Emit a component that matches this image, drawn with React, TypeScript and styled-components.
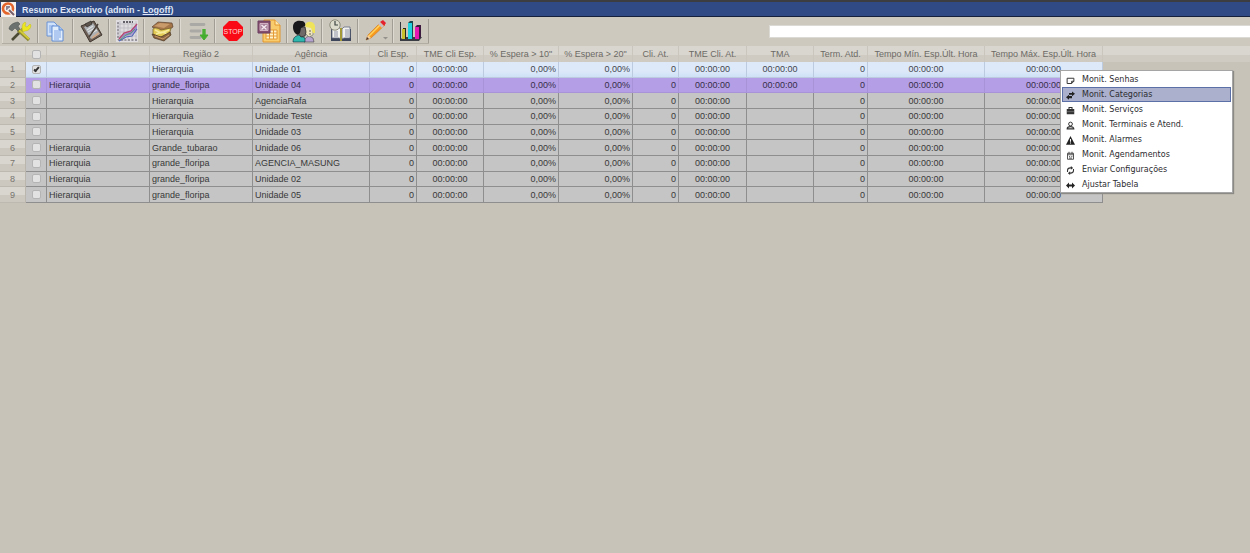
import React from 'react';
import styled, { createGlobalStyle } from 'styled-components';

const GlobalStyle = createGlobalStyle`
  *, *::before, *::after { box-sizing: border-box; }
  html, body, #root { min-height: 100vh; }
  body {
    margin: 0;
    background: #c7c3b8;
    color: #3c3c40;
    font: 9px/12px "Liberation Sans", Arial, sans-serif;
    overflow: hidden;
  }
`;

const TitleBar = styled.header`
  display: flex;
  align-items: center;
  gap: 6px;
  height: 17px;
  padding-left: 1px;
  background: #304a86;
  border-top: 2px solid #3b3d40;
  border-bottom: 1px solid #14203c;
`;

const Logo = styled.svg`
  width: 15px;
  height: 15px;
  background: #f4f1ee;
`;

const Title = styled.h1`
  margin: 0;
  padding-top: 2px;
  color: #dfe6f5;
  font-size: 9px;
  line-height: 12px;
  white-space: nowrap;
  a { color: inherit; }
`;

const Toolbar = styled.div`
  display: flex;
  align-items: center;
  height: 29px;
  padding-left: 2px;
  background: #cdc9be;
`;

const Tools = styled.div`
  display: flex;
  flex: 0 0 427px;
  height: 25px;
  border-bottom: 1px solid #b2ada2;
`;

const ToolButton = styled.button`
  display: flex;
  flex: 1;
  align-items: center;
  justify-content: center;
  padding: 0;
  border: 0;
  border-left: 1px solid #dedad2;
  border-right: 1px solid #a19d94;
  background: #cbc7bd;
  svg { width: 24px; height: 24px; display: block; }
`;

const Search = styled.input`
  flex: 1;
  min-width: 0;
  height: 13px;
  margin-left: 340px;
  padding: 0 4px;
  border: 1px solid #dcdad4;
  border-right: 0;
  background: #fff;
  font: inherit;
`;

const GridArea = styled.main`
  background: linear-gradient(#d9d6cf 0 9px, #cfcac2 9px 16px, transparent 16px);
`;

const Grid = styled.table`
  width: 1103px;
  height: 157px;
  table-layout: fixed;
  border-collapse: separate;
  border-spacing: 0;
`;

const HeadCell = styled.th`
  height: 16px;
  padding: 0;
  border-right: 1px solid #cac6be;
  color: #6c6a65;
  font-weight: normal;
  line-height: 12px;
  white-space: nowrap;
`;

type Tone = 'active' | 'marked' | 'plain';
const fills = {
  active: 'linear-gradient(#dde9f9 0 60%, #cfe1f6)',
  marked: '#b49fe6',
  plain: '#c5c5c5',
};
const rules = { active: '#bccbdf', marked: '#a893d8', plain: '#8e8e8e' };
const ink = { active: '#42464e', marked: '#362e48', plain: '#383838' };

const Cell = styled.td<{ $tone: Tone; $align?: 'left' | 'right' | 'center' }>`
  padding: 0 2px;
  background: ${p => fills[p.$tone]};
  border-right: 1px solid ${p => rules[p.$tone]};
  border-bottom: 1px solid ${p => rules[p.$tone]};
  color: ${p => ink[p.$tone]};
  line-height: 12px;
  text-align: ${p => p.$align ?? 'left'};
  white-space: nowrap;
`;

const RowNumber = styled.th`
  padding: 0;
  border-right: 1px solid #bab6ae;
  border-bottom: 1px solid #bdb8b0;
  background: linear-gradient(#d9d6cf 0 55%, #cdc8bf 55%);
  color: #77756f;
  font-weight: normal;
  line-height: 12px;
`;

const Check = styled.input`
  appearance: none;
  display: block;
  position: relative;
  width: 9px;
  height: 9px;
  margin: 0 auto;
  border: 1px solid #b4b4b4;
  border-radius: 2px;
  background: #e2e2e2;
  &:checked::after {
    content: '';
    position: absolute;
    left: 2px;
    top: 0;
    width: 3px;
    height: 6px;
    border: solid #333;
    border-width: 0 2px 2px 0;
    transform: rotate(42deg);
  }
`;

const Menu = styled.div`
  position: absolute;
  left: 1060px;
  top: 70px;
  width: 173px;
  padding: 1px 1px 0;
  border: 1px solid #a5a5a5;
  background: #fff;
  box-shadow: 1px 1px 1px #8c8a85;
`;

const MenuItem = styled.button<{ $active?: boolean }>`
  display: flex;
  align-items: center;
  gap: 7px;
  width: 100%;
  height: 15px;
  padding: 0 3px;
  border: 1px solid ${p => (p.$active ? '#5a70a6' : 'transparent')};
  background: ${p => (p.$active ? '#abb1cd' : 'transparent')};
  color: #2c2c30;
  font: 8px/12px "DejaVu Sans", Verdana, sans-serif;
  text-align: left;
  white-space: nowrap;
  svg { width: 9px; height: 9px; flex: none; margin-top: 2px; }
`;

const tools = [
  { label: 'Ferramentas', art: <>
    <path d="M4 21 17 8" stroke="#4a4a35" strokeWidth="2.600" />
    <path d="m11 14 6-6" stroke="#a8a23a" strokeWidth="2.600" />
    <path d="m10 11 11 10" stroke="#8d8932" strokeWidth="3.200" />
    <path d="m10 10 11 10" stroke="#d2cb33" strokeWidth="1.800" />
    <path d="M14 9c0-3 1-5 3-6l1 1-1 3 2 1 3-3 1 1c0 4-3 6-6 6l-2 1z" fill="#ece71f" stroke="#bdb82c" strokeWidth=".5" />
    <path d="M1 10c0-3 3-6 9-7l2 2-2 2 2 3-2 2-3-3-3 3z" fill="#6b716e" stroke="#474c4a" strokeWidth=".5" />
  </> },
  { label: 'Copiar', art: <>
    <path d="M4 3h7l3 3v11H4z" fill="#cfe0f9" stroke="#6b92d2" />
    <path d="M6 7h5M6 9h5M6 11h5M6 13h5" stroke="#7ea5e4" />
    <path d="M9 7h7l4 4v11H9z" fill="#e2edfc" stroke="#5f8bd3" />
    <path d="M16 7v4h4" fill="#a9c6ef" stroke="#5f8bd3" />
    <path d="M11 12h7M11 14h7M11 16h7M11 18h7M11 20h5" stroke="#7ea5e4" />
  </> },
  { label: 'Prancheta', art: <>
    <path d="m2 7 13-5 8 14-12 7z" fill="#6d5f55" stroke="#40372f" />
    <path d="m5 8 9-4 7 11-9 5z" fill="#aeb2b4" />
    <path d="m6 5 6-3 1 3-5 3z" fill="#5d544c" stroke="#332f2d" strokeWidth=".7" />
    <path d="m8 11 6-4M9 13l7-4M11 15l7-4" stroke="#dfe1e1" strokeWidth="1.200" />
    <path d="m10 18 7-10 2-3" stroke="#4a413a" strokeWidth="1.500" />
    <path d="m13 19 7-5" stroke="#d0a98a" strokeWidth="1.600" />
  </> },
  { label: 'Gráfico de linhas', art: <>
    <path d="M1 1h22v22H1z" fill="#dfdde0" />
    <path d="M5 2v20M9 2v20M13 2v20M17 2v20M21 2v20M2 5h20M2 9h20M2 13h20M2 17h20" stroke="#b9b6bd" strokeWidth=".7" />
    <path d="M8 3h10" stroke="#3f3b44" strokeDasharray="2 1" strokeWidth="1.500" />
    <path d="M3 3v18h19" stroke="#5f5b66" strokeDasharray="2 1.500" />
    <path d="m4 21 5-6 7-3 6-7v5l-6 6-6 1z" fill="#9a86cf" />
    <path d="m4 20 5-6 7-2 6-7" stroke="#b5476e" strokeWidth="1.400" />
    <path d="m4 22 7-4 6-1 5-7" stroke="#4f62b8" strokeWidth="1.200" />
    <path d="m5 21 6-5 5-2 4-4" stroke="#58a273" />
  </> },
  { label: 'Registros', art: <>
    <path d="m2 8 6-5 14 1 1 4-8 5z" fill="#a5764a" stroke="#5b412b" strokeWidth=".7" />
    <path d="m4 7 6-3 10 1-6 4z" fill="#c99b6b" />
    <path d="M3 10c2-2 5-1 8 1l10-2-2 8-10 1-6-3z" fill="#e2ca55" stroke="#6d5a27" strokeWidth=".7" />
    <path d="m5 11 6 3 8-3M6 15l6-2 6 2" stroke="#f6eb9d" strokeWidth="1.400" />
    <path d="m2 15 9 3 9-5 1 3-7 6-10-3z" fill="#8b6440" stroke="#4c3623" strokeWidth=".7" />
    <path d="m5 17 8 3 6-4" stroke="#c69a6c" />
  </> },
  { label: 'Inserir linha', art: <>
    <path d="M5 5.500h13M5 12h9M5 18.500h9" stroke="#aaa9a5" strokeWidth="2.800" strokeLinecap="round" />
    <path d="M18 10v8" stroke="#4caf35" strokeWidth="3.400" />
    <path d="m14 16 4 5 4-5z" fill="#45ad2d" stroke="#45ad2d" />
  </> },
  { label: 'Parar', art: <>
    <path d="M8 2h8l6 6v8l-6 6H8l-6-6V8z" fill="#f90a14" />
    <text x="12" y="14.500" fill="#ffd9da" fontFamily="Liberation Sans, Arial, sans-serif" fontSize="7" textAnchor="middle">STOP</text>
  </> },
  { label: 'Exportar planilha', art: <>
    <path d="M7 1h11l5 5v17H6V12z" fill="#f8cb6c" stroke="#e0952f" />
    <path d="M18 1v5h5" fill="#ffe9ad" stroke="#e0952f" />
    <path d="M9 11h11v9H9z" fill="#fff3cc" stroke="#e59a35" />
    <path d="M9 14h11M9 17h11M12.500 11v9M16.500 11v9" stroke="#e59a35" />
    <path d="M1 2h12v12H1z" fill="#85506f" stroke="#6b3d60" />
    <path d="M3 4.500h8v7H3z" fill="#a8809a" stroke="#e0c4d2" strokeWidth=".8" />
    <path d="m4.500 6 5 4.500M9.500 6l-5 4.500" stroke="#f6e9ef" strokeWidth="1.400" />
  </> },
  { label: 'Usuários', art: <>
    <path d="M12 23c0-4 3-5 5-6l4 2 1 4z" fill="#b7a3cf" stroke="#444" strokeWidth=".6" />
    <path d="M13 6c4-3 8 0 8 4v6l-4 2-4-4z" fill="#eee6c0" stroke="#555" strokeWidth=".5" />
    <path d="M13 6c2-5 9-4 10 1v7h-2l-2-5-5-1z" fill="#efe35a" />
    <path d="M1 23c0-5 3-6 6-7l6 3v4z" fill="#2fb9ae" stroke="#123" strokeWidth=".6" />
    <path d="M7 8h6l1 5-1 4-4 1-3-4z" fill="#6f6a68" stroke="#222" strokeWidth=".7" />
    <path d="M1 8c0-5 4-7 8-6 3 0 5 2 4 5l-4 2-1 5-2 2c-3-1-5-4-5-8z" fill="#18181a" />
    <path d="M17 12h2M17 15h2" stroke="#6a6353" />
  </> },
  { label: 'Agenda', art: <>
    <path d="M3 10h20v12H3z" fill="#3e465c" />
    <path d="M4 9h8l1 2v9l-2-1H4zM22 8h-6l-2 2v10l2-1h6z" fill="#f2f2ef" stroke="#636b80" strokeWidth=".8" />
    <path d="M6 13h4M6 15h4M6 17h4M17 11h4M17 13h4M17 15h4M17 17h4" stroke="#8d93a6" />
    <path d="M12 9h2v13h-2z" fill="#a39a37" />
    <circle cx="7" cy="6" r="5.200" fill="#dcddcd" stroke="#8c8d7a" />
    <path d="M7 2v4h3" stroke="#3d4641" strokeWidth="1.200" />
  </> },
  { label: 'Editar', art: <>
    <path d="m2 21 2-5L17 3l4 3L7 19z" fill="#f79a1e" stroke="#c86f18" strokeWidth=".5" />
    <path d="m5 17 12-12" stroke="#ffd45f" strokeWidth="1.500" />
    <path d="m16 3 3-2 3 3-2 3z" fill="#e5202e" />
    <path d="m14 5 2-2 4 4-2 2z" fill="#c9bfc2" />
    <path d="m2 21 2-5 3 3z" fill="#f2cf9d" /><path d="m2 21 1-3 2 2z" fill="#433" />
    <path d="M19 18h5l-2.500 2.500z" fill="#93918c" />
  </> },
  { label: 'Gráfico de barras', art: <>
    <path d="m1 21 3-3h19l-3 4H1z" fill="#3a3d44" />
    <path d="M4 9h3v11H4z" fill="#2b2818" /><path d="M3 10h3v10H3z" fill="#c9c12c" />
    <path d="m9 4 2-2h3v18H9z" fill="#17494f" /><path d="M9 4h4v16H9z" fill="#1fd2dd" />
    <path d="m16 8 2-2h4v12l-2 2h-4z" fill="#3c1a40" /><path d="M16 8h4v12h-4z" fill="#e616b0" />
    <path d="M1.500 3v18" stroke="#33363c" />
  </> },
];

const columns = [
  ['Região 1', 103], ['Região 2', 103], ['Agência', 117], ['Cli Esp.', 47], ['TME Cli Esp.', 67],
  ['% Espera > 10"', 75], ['% Espera > 20"', 74], ['Cli. At.', 46], ['TME Cli. At.', 68], ['TMA', 67],
  ['Term. Atd.', 54], ['Tempo Mín. Esp.Últ. Hora', 117], ['Tempo Máx. Esp.Últ. Hora', 118],
] as const;

const rows: { r1: string; r2: string; agency: string; tma?: string; tone: Tone }[] = [
  { r1: '', r2: 'Hierarquia', agency: 'Unidade 01', tma: '00:00:00', tone: 'active' },
  { r1: 'Hierarquia', r2: 'grande_floripa', agency: 'Unidade 04', tma: '00:00:00', tone: 'marked' },
  { r1: '', r2: 'Hierarquia', agency: 'AgenciaRafa', tone: 'plain' },
  { r1: '', r2: 'Hierarquia', agency: 'Unidade Teste', tone: 'plain' },
  { r1: '', r2: 'Hierarquia', agency: 'Unidade 03', tone: 'plain' },
  { r1: 'Hierarquia', r2: 'Grande_tubarao', agency: 'Unidade 06', tone: 'plain' },
  { r1: 'Hierarquia', r2: 'grande_floripa', agency: 'AGENCIA_MASUNG', tone: 'plain' },
  { r1: 'Hierarquia', r2: 'grande_floripa', agency: 'Unidade 02', tone: 'plain' },
  { r1: 'Hierarquia', r2: 'grande_floripa', agency: 'Unidade 05', tone: 'plain' },
];

const menu = [
  { label: 'Monit. Senhas', art: <path d="M1.500 3h9v4l-3 3h-6zM10.500 7h-3v3" stroke="#333" strokeWidth="1.300" /> },
  { label: 'Monit. Categorias', active: true, art: <path d="M4 2.500h4V.5l4 3.300-4 3.200V5H4zM8 6.500H4V5L0 8.300l4 3.200V9.500h4z" fill="#222" /> },
  { label: 'Monit. Serviços', art: <><path d="M1 4h10v7H1z" fill="#333" /><path d="M4 4V2h4v2" stroke="#333" strokeWidth="1.400" /><path d="M1 7.500h10" stroke="#999" strokeWidth=".7" /></> },
  { label: 'Monit. Terminais e Atend.', art: <><circle cx="6" cy="4" r="2.500" stroke="#333" strokeWidth="1.300" /><path d="M1.500 10.500c0-2 2-3 4.500-3s4.500 1 4.500 3z" stroke="#333" strokeWidth="1.400" /></> },
  { label: 'Monit. Alarmes', art: <><path d="m6 0 6 11.500H0z" fill="#222" /><path d="M6 4v3.500M6 8.500v1.500" stroke="#fff" strokeWidth="1.400" /></> },
  { label: 'Monit. Agendamentos', art: <path d="M2 3h8v8H2zM2 5h8M4 1v3M8 1v3M4 7.500h1.500M7 7.500h1.500M4 9.500h4" stroke="#444" strokeWidth="1.200" /> },
  { label: 'Enviar Configurações', art: <><path d="M2 8V6c0-2 1.500-3.500 4-3.500h1M10 4v2c0 2-1.500 3.500-4 3.500H5" stroke="#333" strokeWidth="1.400" /><path d="m6.500 0 3 2.500-3 2.500zM5.500 7l-3 2.500 3 2.500z" fill="#333" /></> },
  { label: 'Ajustar Tabela', art: <path d="m0 6 4-4v2.800h4V2l4 4-4 4V7.200H4V10z" fill="#222" /> },
];

export default function App() {
  return (
    <>
      <GlobalStyle />
      <TitleBar>
        <Logo viewBox="0 0 15 15" fill="none" aria-hidden="true">
          <circle cx="7" cy="6.500" r="5" stroke="#e4652b" strokeWidth="2.600" />
          <path d="M5 4h4v4H5z" fill="#8d8290" />
          <path d="m7 7 7 7" stroke="#f4f1ee" strokeWidth="4" />
          <path d="m8 8 5 5" stroke="#775e68" strokeWidth="2" />
        </Logo>
        <Title>Resumo Executivo (admin - <a href="#logoff">Logoff</a>)</Title>
      </TitleBar>
      <Toolbar>
        <Tools role="toolbar" aria-label="Ferramentas">
          {tools.map(t => (
            <ToolButton key={t.label} type="button" aria-label={t.label}>
              <svg viewBox="0 0 24 24" fill="none" aria-hidden="true">{t.art}</svg>
            </ToolButton>
          ))}
        </Tools>
        <Search type="text" aria-label="Pesquisar" />
      </Toolbar>
      <GridArea>
        <Grid>
          <colgroup>
            <col width={26} />
            <col width={21} />
            {columns.map(([name, width]) => <col key={name} width={width} />)}
          </colgroup>
          <thead>
            <tr>
              <HeadCell />
              <HeadCell><Check type="checkbox" aria-label="Selecionar todas" /></HeadCell>
              {columns.map(([name]) => <HeadCell key={name} scope="col">{name}</HeadCell>)}
            </tr>
          </thead>
          <tbody>
            {rows.map((r, i) => (
              <tr key={r.agency}>
                <RowNumber scope="row">{i + 1}</RowNumber>
                <Cell $tone={r.tone}><Check type="checkbox" defaultChecked={i === 0} aria-label={`Selecionar ${r.agency}`} /></Cell>
                <Cell $tone={r.tone}>{r.r1}</Cell>
                <Cell $tone={r.tone}>{r.r2}</Cell>
                <Cell $tone={r.tone}>{r.agency}</Cell>
                <Cell $tone={r.tone} $align="right">0</Cell>
                <Cell $tone={r.tone} $align="center">00:00:00</Cell>
                <Cell $tone={r.tone} $align="right">0,00%</Cell>
                <Cell $tone={r.tone} $align="right">0,00%</Cell>
                <Cell $tone={r.tone} $align="right">0</Cell>
                <Cell $tone={r.tone} $align="center">00:00:00</Cell>
                <Cell $tone={r.tone} $align="center">{r.tma}</Cell>
                <Cell $tone={r.tone} $align="right">0</Cell>
                <Cell $tone={r.tone} $align="center">00:00:00</Cell>
                <Cell $tone={r.tone} $align="center">00:00:00</Cell>
              </tr>
            ))}
          </tbody>
        </Grid>
      </GridArea>
      <Menu role="menu">
        {menu.map(m => (
          <MenuItem key={m.label} type="button" role="menuitem" $active={m.active}>
            <svg viewBox="0 0 12 12" fill="none" aria-hidden="true">{m.art}</svg>
            {m.label}
          </MenuItem>
        ))}
      </Menu>
    </>
  );
}
